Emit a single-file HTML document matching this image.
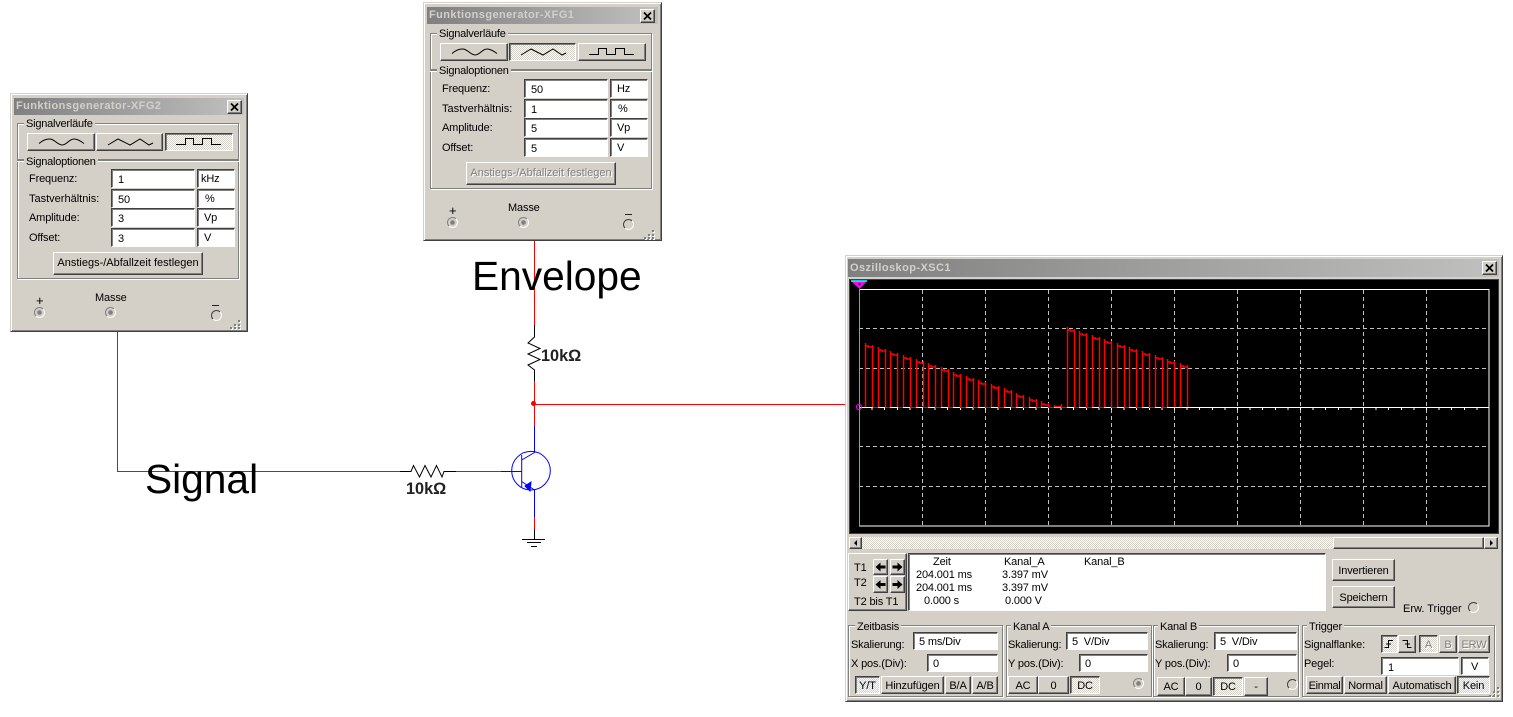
<!DOCTYPE html>
<html><head><meta charset="utf-8"><style>
html,body{margin:0;padding:0;background:#fff}
body{position:relative;width:1513px;height:717px;overflow:hidden;font:11px/13px "Liberation Sans",sans-serif;color:#000;letter-spacing:-.15px}
div,span.a{position:absolute;box-sizing:border-box;white-space:nowrap}
svg{position:absolute;left:0;top:0;overflow:visible}
.w{background:#d4d0c8;border:1px solid;border-color:#d4d0c8 #404040 #404040 #d4d0c8;box-shadow:inset 1px 1px #fff,inset -1px -1px #808080}
.ti{background:linear-gradient(90deg,#808080,#c0c0c0);color:#d4d0c8;font:bold 11px/17px "Liberation Sans",sans-serif;padding-left:2px;letter-spacing:.42px}
.x{background:#d4d0c8;border:1px solid;border-color:#fff #404040 #404040 #fff;box-shadow:inset -1px -1px #808080}
.g{border:1px solid #808080;box-shadow:1px 1px #fff,inset 1px 1px #fff}
.l{background:#d4d0c8;padding:0 2px;letter-spacing:-.22px}
.b,.p{display:flex;align-items:center;justify-content:center;background:#d4d0c8;border:1px solid;border-color:#fff #404040 #404040 #fff;box-shadow:inset -1px -1px #808080}
.p{border-color:#404040 #fff #fff #404040;box-shadow:inset 1px 1px #808080;background:repeating-conic-gradient(#fff 0 25%,#d4d0c8 0 50%) 0 0/2px 2px}
body>.b,body>.p{padding-top:2px}
.i{background:#fff;border:1px solid;border-color:#404040 #fff #fff #404040;box-shadow:inset 1px 1px #808080;padding:4px 0 0 6px}
.u{padding:3px 0 0 6px}
.s{padding-top:3px!important;padding-left:5px!important}
.t{width:11px;height:11px;border-radius:50%;border:1px solid;border-color:#808080 #fff #fff #808080;background:radial-gradient(circle,#808080 0 2px,transparent 2.6px)}
.e{background:none;border-color:#404040 #fff #fff #404040}
.dis{color:#808080;text-shadow:1px 1px #fff}
.gp{width:2px;height:2px;background:#808080;box-shadow:1px 1px #fff}
.n{letter-spacing:0}
.big{font-size:40.7px;line-height:46px;letter-spacing:0}
.ohm{font:bold 16.3px/18px "Liberation Sans",sans-serif;color:#222;letter-spacing:0}
</style></head><body>

<svg width="1513" height="717" fill="none" shape-rendering="crispEdges">
<path d="M117.5 332V471.5H400M534.5 241V325M534.5 381V426M534.5 404.5H846M455 471.5H501M534.5 517V529" stroke="#f00"/>
<g shape-rendering="auto">
<path d="M400 471.5H411L413.5 465.5L419.5 477L425 465.5L431 477L436.5 465.5L442 477L444 471.5H456" stroke="#000"/>
<path d="M534.5 325V337L528 343L540 348.5L528 354L540 359.5L528 365L534.5 370V381" stroke="#000"/>
<circle cx="533.5" cy="403.5" r="2.5" fill="#f00"/>
<circle cx="531" cy="470.7" r="19.3" stroke="#00f"/>
<path d="M534.5 426V452.5L521.7 460M501 471.5H521.7M521.7 455V487M521.7 481.5L534.5 490V517" stroke="#00f"/>
<path d="M531 482L530 491L525 486Z" fill="#00f" stroke="#00f"/>
</g>
<path d="M534.5 529V539M522 539.5H545M527 542.5H541M531 546.5H537" stroke="#000"/>
</svg>

<!-- XFG2 -->
<div class="w" style="left:10px;top:93px;width:238px;height:239px">
 <div class="ti" style="left:3px;top:4px;width:230px;height:17px">Funktionsgenerator-XFG2</div>
 <div class="x" style="left:216px;top:6px;width:15px;height:14px"><svg width="13" height="12"><path d="M3 2.5L10 9.5M10 2.5L3 9.5" stroke="#000" stroke-width="1.8"/></svg></div>
 <div class="g" style="left:6px;top:29px;width:222px;height:156px"></div>
 <div class="l" style="left:13px;top:24px">Signalverläufe</div>
 <div class="b" style="left:16px;top:39px;width:68px;height:18px"><svg width="66" height="16" fill="none"><path d="M11 9.5C15 6 18 4.8 22 5C27 5.5 29 10.5 34 11C39 11 41 5 46 5C50 5 54 8 56 9.5" stroke="#000"/></svg></div>
 <div class="b" style="left:85px;top:39px;width:67px;height:18px"><svg width="65" height="16" fill="none"><path d="M11 11L21 5L33 11L43 5L52 11L56 9" stroke="#000"/></svg></div>
 <div class="p" style="left:154px;top:39px;width:68px;height:18px"><svg width="66" height="16" fill="none" shape-rendering="crispEdges"><path d="M10 10.5H19.5V4.5H27.5V10.5H36.5V4.5H45.5V10.5H55" stroke="#000"/></svg></div>
 <div class="g" style="left:6px;top:65px;width:222px;height:1px;box-shadow:0 1px #fff"></div>
 <div class="l" style="left:13px;top:62px">Signaloptionen</div>
 <div style="left:18px;top:79px">Frequenz:</div><div class="i" style="left:100px;top:75px;width:84px;height:19px">1</div><div class="i u" style="left:186px;top:75px;width:38px;height:19px;padding-left:3px">kHz</div>
 <div class="n" style="left:18px;top:99px">Tastverhältnis:</div><div class="i" style="left:100px;top:95px;width:84px;height:19px">50</div><div class="i u" style="left:186px;top:95px;width:38px;height:19px;padding-left:7px">%</div>
 <div style="left:18px;top:118px">Amplitude:</div><div class="i" style="left:100px;top:114px;width:84px;height:19px">3</div><div class="i u" style="left:186px;top:114px;width:38px;height:19px">Vp</div>
 <div style="left:18px;top:138px">Offset:</div><div class="i" style="left:100px;top:134px;width:84px;height:19px">3</div><div class="i u" style="left:186px;top:134px;width:38px;height:19px">V</div>
 <div class="b n" style="left:42px;top:158px;width:150px;height:23px">Anstiegs-/Abfallzeit festlegen</div>
 <div style="left:25px;top:200px;font-size:13px">+</div>
 <div class="t" style="left:23px;top:213px"></div>
 <div style="left:84px;top:198px">Masse</div>
 <div class="t" style="left:94px;top:213px"></div>
 <div style="left:201px;top:211px;width:7px;height:1px;background:#222"></div>
 <div class="t e" style="left:200px;top:216px"></div>
 <div class="gp" style="left:227px;top:226px"></div><div class="gp" style="left:223px;top:230px"></div><div class="gp" style="left:227px;top:230px"></div><div class="gp" style="left:219px;top:233px"></div><div class="gp" style="left:223px;top:233px"></div><div class="gp" style="left:227px;top:233px"></div>
</div>

<!-- XFG1 -->
<div class="w" style="left:423px;top:2px;width:239px;height:239px">
 <div class="ti" style="left:3px;top:4px;width:231px;height:17px">Funktionsgenerator-XFG1</div>
 <div class="x" style="left:216px;top:6px;width:15px;height:14px"><svg width="13" height="12"><path d="M3 2.5L10 9.5M10 2.5L3 9.5" stroke="#000" stroke-width="1.8"/></svg></div>
 <div class="g" style="left:6px;top:30px;width:222px;height:156px"></div>
 <div class="l" style="left:13px;top:25px">Signalverläufe</div>
 <div class="b" style="left:16px;top:40px;width:68px;height:18px"><svg width="66" height="16" fill="none"><path d="M11 9.5C15 6 18 4.8 22 5C27 5.5 29 10.5 34 11C39 11 41 5 46 5C50 5 54 8 56 9.5" stroke="#000"/></svg></div>
 <div class="p" style="left:85px;top:40px;width:67px;height:18px"><svg width="65" height="16" fill="none"><path d="M11 11L21 5L33 11L43 5L52 11L56 9" stroke="#000"/></svg></div>
 <div class="b" style="left:154px;top:40px;width:68px;height:18px"><svg width="66" height="16" fill="none" shape-rendering="crispEdges"><path d="M10 10.5H19.5V4.5H27.5V10.5H36.5V4.5H45.5V10.5H55" stroke="#000"/></svg></div>
 <div class="g" style="left:6px;top:66px;width:222px;height:1px;box-shadow:0 1px #fff"></div>
 <div class="l" style="left:13px;top:62px">Signaloptionen</div>
 <div style="left:18px;top:80px">Frequenz:</div><div class="i" style="left:100px;top:76px;width:84px;height:19px">50</div><div class="i u" style="left:186px;top:76px;width:38px;height:19px">Hz</div>
 <div class="n" style="left:18px;top:100px">Tastverhältnis:</div><div class="i" style="left:100px;top:96px;width:84px;height:19px">1</div><div class="i u" style="left:186px;top:96px;width:38px;height:19px;padding-left:7px">%</div>
 <div style="left:18px;top:119px">Amplitude:</div><div class="i" style="left:100px;top:115px;width:84px;height:19px">5</div><div class="i u" style="left:186px;top:115px;width:38px;height:19px">Vp</div>
 <div style="left:18px;top:139px">Offset:</div><div class="i" style="left:100px;top:135px;width:84px;height:19px">5</div><div class="i u" style="left:186px;top:135px;width:38px;height:19px">V</div>
 <div class="b dis n" style="left:42px;top:159px;width:150px;height:23px">Anstiegs-/Abfallzeit festlegen</div>
 <div style="left:25px;top:201px;font-size:13px">+</div>
 <div class="t" style="left:23px;top:214px"></div>
 <div style="left:84px;top:199px">Masse</div>
 <div class="t" style="left:94px;top:214px"></div>
 <div style="left:201px;top:211px;width:7px;height:1px;background:#222"></div>
 <div class="t e" style="left:199px;top:216px"></div>
 <div class="gp" style="left:228px;top:227px"></div><div class="gp" style="left:224px;top:231px"></div><div class="gp" style="left:228px;top:231px"></div><div class="gp" style="left:220px;top:234px"></div><div class="gp" style="left:224px;top:234px"></div><div class="gp" style="left:228px;top:234px"></div>
</div>

<div class="big" style="left:472px;top:253px">Envelope</div>
<div class="big" style="left:145px;top:456px">Signal</div>
<div class="ohm" style="left:541px;top:347px">10kΩ</div>
<div class="ohm" style="left:406px;top:480px">10kΩ</div>

<!-- Oscilloscope -->
<div class="w" style="left:845px;top:255px;width:658px;height:447px"></div>
<div class="ti" style="left:848px;top:259px;width:651px;height:18px;line-height:19px">Oszilloskop-XSC1</div>
<div class="x" style="left:1482px;top:261px;width:15px;height:14px"><svg width="13" height="12"><path d="M3 2.5L10 9.5M10 2.5L3 9.5" stroke="#000" stroke-width="1.8"/></svg></div>

<svg width="1513" height="717" fill="none" shape-rendering="crispEdges">
<rect x="849" y="279" width="650" height="255" fill="#404040"/>
<rect x="850" y="280" width="648" height="253" fill="#000"/>
<g stroke="#c0c0c0" stroke-dasharray="4 3">
<path d="M922.5 290V526M985.5 290V526M1048.5 290V526M1111.5 290V526M1174.5 290V526M1237.5 290V526M1300.5 290V526M1363.5 290V526M1426.5 290V526"/>
<path d="M859 328.5H1489M859 368.5H1489M859 446.5H1489M859 486.5H1489"/>
</g>
<rect x="859.5" y="289.5" width="629.5" height="236.5" stroke="#fff"/>
<path d="M859 407.5H1489" stroke="#fff"/>
<path d="M859 409H1489" stroke="#fff" stroke-width="2" stroke-dasharray="1 11.6"/>
<path d="M859.5 289V526" stroke="#0f0"/>
<path d="M873 407.5H878M885 407.5H890M898 407.5H903M910 407.5H916M923 407.5H928M935 407.5H941M948 407.5H953M960 407.5H966M973 407.5H978M985 407.5H991M998 407.5H1004M1011 407.5H1016M1023 407.5H1029M1036 407.5H1041M1048 407.5H1054M1061 407.5H1067M1074 407.5H1079M1086 407.5H1092M1099 407.5H1104M1111 407.5H1117M1124 407.5H1129M1136 407.5H1142M1149 407.5H1155M1161 407.5H1167" stroke="#f00"/>
<path stroke="#f00" stroke-width="1.5" shape-rendering="auto" d="M865.5 407V343m0 3h3v1h4m0-2V407M878.5 407V347m0 3h3v1h4m0-2V407M890.5 407V351m0 3h3v1h4m0-2V407M903.5 407V355m0 3h3v1h4m0-2V407M916.5 407V359m0 3h3v1h4m0-2V407M928.5 407V363m0 3h3v1h4m0-2V407M941.5 407V367m0 3h3v1h4m0-2V407M953.5 407V372m0 3h3v1h4m0-2V407M966.5 407V376m0 3h3v1h4m0-2V407M978.5 407V380m0 3h3v1h4m0-2V407M991.5 407V384m0 3h3v1h4m0-2V407M1004.5 407V388m0 3h3v1h4m0-2V407M1016.5 407V393m0 3h3v1h4m0-2V407M1029.5 407V397m0 3h3v1h4m0-2V407M1041.5 407V401m0 3h3v1h4m0-2V407M1054.5 407V405M1054.5 406.5h7M1061.5 407V404M1067.5 407V327m0 3h3v1h4m0-2V407M1079.5 407V331m0 3h3v1h4m0-2V407M1092.5 407V335m0 3h3v1h4m0-2V407M1104.5 407V339m0 3h3v1h4m0-2V407M1117.5 407V343m0 3h3v1h4m0-2V407M1129.5 407V347m0 3h3v1h4m0-2V407M1142.5 407V351m0 3h3v1h4m0-2V407M1155.5 407V355m0 3h3v1h4m0-2V407M1167.5 407V359m0 3h3v1h4m0-2V407M1180.5 407V363m0 3h3v1h4m0-2V407"/>
<g shape-rendering="auto">
<path d="M851 281H867L859.5 289Z" fill="#f0f"/>
<path d="M851 281H867" stroke="#0ff" stroke-width="1.6"/>
<rect x="858.5" y="283" width="2" height="2" fill="#000"/>
<circle cx="859" cy="407" r="2.6" stroke="#f0f"/>
</g>
</svg>

<!-- scrollbar -->
<div style="left:849px;top:537px;width:649px;height:12px;background:repeating-conic-gradient(#fff 0 25%,#d4d0c8 0 50%) 0 0/2px 2px"></div>
<div class="b" style="left:849px;top:537px;width:13px;height:12px"><svg width="11" height="10"><path d="M4 5L7 2V8Z" fill="#000"/></svg></div>
<div class="b" style="left:1333px;top:537px;width:151px;height:12px"></div>
<div class="b" style="left:1484px;top:537px;width:14px;height:12px"><svg width="12" height="10"><path d="M8 5L5 2V8Z" fill="#000"/></svg></div>

<!-- cursors -->
<div class="b" style="left:848px;top:553px;width:59px;height:58px;display:block"></div>
<div style="left:854px;top:562px">T1</div>
<div style="left:854px;top:577px">T2</div>
<div style="left:854px;top:596px">T2 bis T1</div>
<div class="b" style="left:873px;top:559px;width:15px;height:16px"><svg width="13" height="14"><path d="M1.5 7L6.5 2.5V5.5H11.5V8.5H6.5V11.5Z" fill="#000"/></svg></div>
<div class="b" style="left:890px;top:559px;width:15px;height:16px"><svg width="13" height="14"><path d="M11.5 7L6.5 2.5V5.5H1.5V8.5H6.5V11.5Z" fill="#000"/></svg></div>
<div class="b" style="left:873px;top:576px;width:15px;height:17px"><svg width="13" height="15"><path d="M1.5 7.5L6.5 3V6H11.5V9H6.5V12Z" fill="#000"/></svg></div>
<div class="b" style="left:890px;top:576px;width:15px;height:17px"><svg width="13" height="15"><path d="M11.5 7.5L6.5 3V6H1.5V9H6.5V12Z" fill="#000"/></svg></div>
<div class="i" style="left:908px;top:553px;width:418px;height:58px;padding:0"></div>
<div style="left:933px;top:556px">Zeit</div>
<div style="left:1004px;top:556px">Kanal_A</div>
<div style="left:1084px;top:556px">Kanal_B</div>
<div style="left:916px;top:569px">204.001 ms</div><div style="left:1002px;top:569px">3.397 mV</div>
<div style="left:916px;top:582px">204.001 ms</div><div style="left:1002px;top:582px">3.397 mV</div>
<div style="left:924px;top:595px">0.000 s</div><div style="left:1005px;top:595px">0.000 V</div>
<div class="b" style="left:1332px;top:559px;width:63px;height:22px">Invertieren</div>
<div class="b" style="left:1332px;top:586px;width:63px;height:22px">Speichern</div>
<div class="n" style="left:1403px;top:603px">Erw. Trigger</div>
<div class="t e" style="left:1468px;top:602px"></div>

<!-- groups -->
<div class="g" style="left:848px;top:625px;width:155px;height:72px"></div><div class="l" style="left:855px;top:621px">Zeitbasis</div>
<div class="g" style="left:1006px;top:625px;width:146px;height:72px"></div><div class="l" style="left:1011px;top:621px">Kanal A</div>
<div class="g" style="left:1153px;top:625px;width:146px;height:72px"></div><div class="l" style="left:1158px;top:621px">Kanal B</div>
<div class="g" style="left:1302px;top:625px;width:193px;height:72px"></div><div class="l" style="left:1307px;top:621px">Trigger</div>

<div style="left:851px;top:639px">Skalierung:</div><div class="i s" style="left:913px;top:632px;width:85px;height:18px">5 ms/Div</div>
<div style="left:851px;top:658px">X pos.(Div):</div><div class="i s" style="left:927px;top:654px;width:71px;height:18px">0</div>
<div class="p" style="left:855px;top:676px;width:25px;height:18px">Y/T</div>
<div class="b" style="left:881px;top:676px;width:63px;height:18px">Hinzufügen</div>
<div class="b" style="left:945px;top:676px;width:26px;height:18px">B/A</div>
<div class="b" style="left:972px;top:676px;width:26px;height:18px">A/B</div>

<div style="left:1008px;top:639px">Skalierung:</div><div class="i s" style="left:1066px;top:632px;width:82px;height:18px">5&nbsp; V/Div</div>
<div style="left:1008px;top:658px">Y pos.(Div):</div><div class="i s" style="left:1079px;top:654px;width:69px;height:18px">0</div>
<div class="b" style="left:1008px;top:676px;width:30px;height:18px">AC</div>
<div class="b" style="left:1038px;top:676px;width:31px;height:18px">0</div>
<div class="p" style="left:1070px;top:676px;width:30px;height:18px">DC</div>
<div class="t" style="left:1133px;top:678px"></div>

<div style="left:1155px;top:639px">Skalierung:</div><div class="i s" style="left:1214px;top:632px;width:83px;height:18px">5&nbsp; V/Div</div>
<div style="left:1155px;top:658px">Y pos.(Div):</div><div class="i s" style="left:1227px;top:654px;width:70px;height:18px">0</div>
<div class="b" style="left:1157px;top:677px;width:28px;height:19px">AC</div>
<div class="b" style="left:1185px;top:677px;width:27px;height:19px">0</div>
<div class="p" style="left:1213px;top:677px;width:30px;height:19px">DC</div>
<div class="b" style="left:1244px;top:677px;width:24px;height:19px">-</div>
<div class="t e" style="left:1287px;top:679px"></div>

<div style="left:1304px;top:639px">Signalflanke:</div>
<div class="p" style="left:1381px;top:635px;width:17px;height:18px"><svg width="15" height="16" fill="none"><path d="M2.5 11.5H6.5V4.5H11M4 8H9" stroke="#000"/></svg></div>
<div class="b" style="left:1398px;top:635px;width:18px;height:18px"><svg width="16" height="16" fill="none"><path d="M3.5 4.5H8.5V11.5H12.5M6 8H11" stroke="#000"/></svg></div>
<div class="p dis" style="left:1419px;top:635px;width:19px;height:18px">A</div>
<div class="b dis" style="left:1439px;top:635px;width:18px;height:18px">B</div>
<div class="b dis" style="left:1458px;top:635px;width:32px;height:18px">ERW</div>
<div style="left:1304px;top:658px">Pegel:</div>
<div class="i" style="left:1381px;top:657px;width:78px;height:18px">1</div>
<div class="i u" style="left:1461px;top:657px;width:28px;height:18px;padding-left:9px">V</div>
<div class="b" style="left:1306px;top:676px;width:37px;height:18px;letter-spacing:-.3px">Einmal</div>
<div class="b" style="left:1344px;top:676px;width:43px;height:18px">Normal</div>
<div class="b" style="left:1388px;top:676px;width:68px;height:18px">Automatisch</div>
<div class="p" style="left:1457px;top:676px;width:33px;height:18px">Kein</div>
<div class="gp" style="left:1497px;top:687px"></div><div class="gp" style="left:1493px;top:691px"></div><div class="gp" style="left:1497px;top:691px"></div><div class="gp" style="left:1489px;top:695px"></div><div class="gp" style="left:1493px;top:695px"></div><div class="gp" style="left:1497px;top:695px"></div>
</body></html>
